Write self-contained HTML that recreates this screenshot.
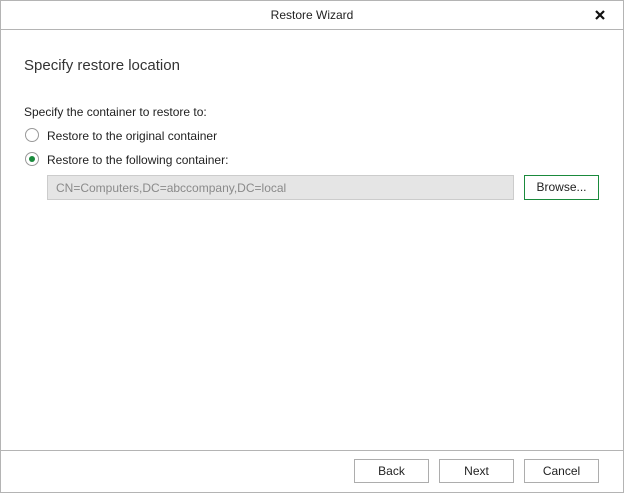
<!DOCTYPE html><html><head><style>
body{margin:0;width:624px;height:493px;background:#fff;font-family:"Liberation Sans",sans-serif;font-size:12px;color:#222;position:relative;overflow:hidden}
.b{position:absolute;box-sizing:border-box}
.t{position:absolute;white-space:nowrap}
.btn{position:absolute;box-sizing:border-box;border:1px solid #adadad;background:#fff;text-align:center;line-height:22px;height:24px}
</style></head><body>
<div class="b" style="left:0;top:0;width:624px;height:493px;border:1px solid #b4b4b4"></div>
<div class="b" style="left:0;top:29px;width:624px;height:1px;background:#b4b4b4"></div>
<div class="t" style="left:0;width:624px;text-align:center;top:8px">Restore Wizard</div>
<svg class="b" style="left:595px;top:10px" width="10" height="10"><path d="M1 1L9 9M9 1L1 9" stroke="#111" stroke-width="2.2"/></svg>
<div class="t" style="left:24px;top:57px;font-size:15px;color:#333">Specify restore location</div>
<div class="t" style="left:24px;top:105px">Specify the container to restore to:</div>
<div class="b" style="left:25px;top:128px;width:14px;height:14px;border:1px solid #999;border-radius:50%"></div>
<div class="t" style="left:47px;top:129px">Restore to the original container</div>
<div class="b" style="left:25px;top:152px;width:14px;height:14px;border:1px solid #999;border-radius:50%"></div>
<div class="b" style="left:29px;top:156px;width:6px;height:6px;background:#1a8a3c;border-radius:50%"></div>
<div class="t" style="left:47px;top:153px">Restore to the following container:</div>
<div class="b" style="left:47px;top:175px;width:467px;height:25px;background:#e5e5e5;border:1px solid #ccc"></div>
<div class="t" style="left:56px;top:181px;color:#8a8a8a">CN=Computers,DC=abccompany,DC=local</div>
<div class="btn" style="left:524px;top:175px;width:75px;height:25px;border-color:#1a8a3c;line-height:23px">Browse...</div>
<div class="b" style="left:0;top:450px;width:624px;height:1px;background:#b4b4b4"></div>
<div class="btn" style="left:354px;top:459px;width:75px">Back</div>
<div class="btn" style="left:439px;top:459px;width:75px">Next</div>
<div class="btn" style="left:524px;top:459px;width:75px">Cancel</div>
</body></html>
